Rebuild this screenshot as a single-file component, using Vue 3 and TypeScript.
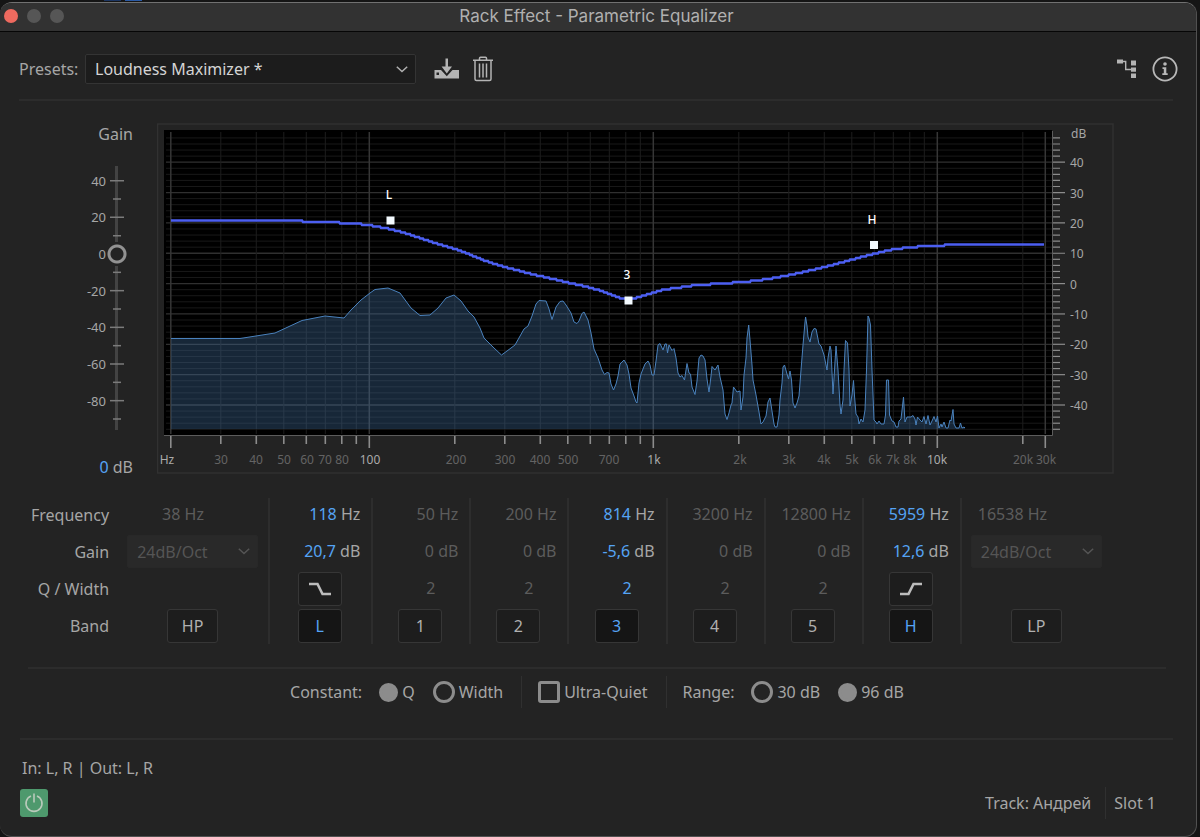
<script setup lang="ts">
import { ref } from 'vue'

type Point = [number, number]

interface Band {
  id: string
  freq: string
  gain: string
  q?: string
  shelf?: 'low' | 'high'
  on: boolean
}

const preset = ref('Loudness Maximizer *')
const masterGain = ref(0)
const constant = ref('q')
const ultraQuiet = ref(false)
const range = ref('96')

const bands = ref<Band[]>([
  { id: 'L', freq: '118', gain: '20,7', shelf: 'low', on: true },
  { id: '1', freq: '50', gain: '0', q: '2', on: false },
  { id: '2', freq: '200', gain: '0', q: '2', on: false },
  { id: '3', freq: '814', gain: '-5,6', q: '2', on: true },
  { id: '4', freq: '3200', gain: '0', q: '2', on: false },
  { id: '5', freq: '12800', gain: '0', q: '2', on: false },
  { id: 'H', freq: '5959', gain: '12,6', shelf: 'high', on: true },
])

/* Graph scales */
const freqX = (hz: number) => 369.3 + 284 * (Math.log10(hz) - 2)
const dbY = (db: number) => 283.6 - 3.035 * db

const freqs = [
  20, 30, 40, 50, 60, 70, 80, 90, 100, 200, 300, 400, 500, 600, 700, 800, 900,
  1000, 2000, 3000, 4000, 5000, 6000, 7000, 8000, 9000, 10000, 20000, 24000,
]
const majors = [20, 100, 1000, 10000, 24000]
const vLines = freqs.map((f) => ({ x: freqX(f), major: majors.includes(f) }))
const hLines = Array.from({ length: 49 }, (_, i) => 48 - i * 2).map((db) => ({
  db,
  y: dbY(db),
  major: db % 10 === 0,
}))
const dbLabels = hLines.filter((l) => l.major)

const freqLabels: { t: string; x: number; hi?: boolean }[] = [
  { t: 'Hz', x: 167, hi: true },
  { t: '30', x: 221 }, { t: '40', x: 256 }, { t: '50', x: 284 }, { t: '60', x: 307 },
  { t: '70', x: 325 }, { t: '80', x: 342 }, { t: '100', x: 370, hi: true },
  { t: '200', x: 456 }, { t: '300', x: 505 }, { t: '400', x: 540 }, { t: '500', x: 568 },
  { t: '700', x: 609 }, { t: '1k', x: 654, hi: true },
  { t: '2k', x: 740 }, { t: '3k', x: 789 }, { t: '4k', x: 824 }, { t: '5k', x: 852 },
  { t: '6k', x: 875 }, { t: '7k', x: 893 }, { t: '8k', x: 910 }, { t: '10k', x: 937, hi: true },
  { t: '20k', x: 1023 }, { t: '30k', x: 1046 },
]

/* Response curve, drawn in small level steps */
const curve: Point[] = [
  [171, 220.5], [302, 220.5], [304, 222], [338, 222], [340, 223.4], [355, 223.6], [368, 225],
  [378, 226.8], [390, 229], [405, 233], [420, 238], [438, 244], [455, 249], [470, 254.5],
  [483, 260], [503, 266.5], [520, 271], [540, 276], [570, 283], [585, 286.4], [600, 290.4], [610, 294],
  [620, 298], [628, 299.6], [636, 298], [650, 293.8], [663, 289.8], [680, 287.5], [695, 285.2],
  [715, 284], [737, 282.4], [753, 281], [768, 279], [790, 275], [812, 270], [834, 264.5],
  [856, 258.5], [874, 253.8], [890, 250], [904, 248], [919, 246.6], [947, 245.1], [1044, 245],
]
function levelAt(x: number): number {
  const i = Math.max(1, curve.findIndex((p) => p[0] >= x))
  const [x0, y0] = curve[i - 1]
  const [x1, y1] = curve[i]
  return y0 + ((y1 - y0) * (x - x0)) / (x1 - x0)
}
function steppedPath(): string {
  const snap = (v: number) => Math.round(v / 1.5) * 1.5
  let last = snap(levelAt(171))
  let d = `M171 ${last}`
  for (let x = 172; x <= 1044; x++) {
    const y = snap(levelAt(x))
    if (y !== last) {
      d += `H${x - 1}L${x} ${y}`
      last = y
    }
  }
  return d + 'H1044'
}
const curvePath = steppedPath()

const spectrum =
  '171,338.5 240,338.5 275,333 302,320.5 325,316 344,318 351,310 361,300 370,293 375,289.5 388,288 400,293 411,308 ' +
  '420,315.5 430,315 438,308 446,298 454,295 461,301 468,311 474,317 480,328 484,338 494,348 501.5,355 507,351 ' +
  '515,345 524,329 528,326 532,316 536,304 539,300.5 546,301 549,309 552,319.5 556,307 560,301.5 563,301 566,305 ' +
  '571,313 574,322 577,323.5 579,321 582,313.5 584,312 588,320 591,333 594,349 598,358 602,370 604.5,374.5 ' +
  '607,372.5 609,373 611,384 613.5,390 616,384 618,376 620,364 624,360 627,365 629,374 631,388 634,396 636,402 ' +
  '637,403 639,383 641,374 645,364 648,361 650,365 652,375 654,375 656,361 658,345 660,343.5 663,350 665,344 ' +
  '666.5,344 667.5,353 669,345 672,350.5 674,348.5 676,358 678,373 680,377 682,375.5 684.5,380 687,363.5 689,373 ' +
  '690.5,374 692,387 695,394.5 697,381 699,358 701,355 703,356 705,360 707,379 709,392 711,376 712,366.5 715,370 ' +
  '718,365 720,377 723,390 725,414 727,419.5 729,413 731,405 732,403 733.5,387 737,392 740,391 741,410 743,397 ' +
  '744,375 746,358 747,338 748.7,325 750,340 752,365 753,380 756,395 759,412 761,424 763,422 766,416 768,402 ' +
  '770,398 772,411 774,424 775,427 777,427 779,415 780,400 782,383 783,367 784.5,365 787,374 788.5,379 790,371 ' +
  '791.5,380 793,403 795,408 797,403 799,396 801,370 803,345 805,322 805.6,317 807,326 808,337 810,342 812,332 ' +
  '814,328.5 816,329 817,334 819,344 821,346 824,355 827,370 828,358 830,346 831,350 833,394 834,378 836,346 ' +
  '838,370 840,405 841,414 843,400 844,370 845.5,340.5 847.5,343 849,370 850,406 852,395 853.5,380.5 854.5,396 ' +
  '856,414 858,417 859,424 861,419 863,422 865,410 866.5,370 868,316 869,318 870.5,325 872,370 874,420 876,422 ' +
  '877,424 879,421 881,424 884,424 885.5,415 886.5,380 888.5,380 889.5,415 892,421 894,422 896,427 898,427 ' +
  '899,421 901,419 903.5,397 905,422 907,417 911,417 913,415.5 915,419 916,425 917.5,417 920,420 922,422 ' +
  '924,416.5 926,424 928,415.5 930,425 932,421 934,416.5 936,422 937.5,416 939,428 941,424 942,427 944,422 ' +
  '946,428 948,428 950,420 951,421 953,409.5 954,424 956,428 959,428 960.5,423 962,428 964,427 965,428'
const spectrumArea = `${spectrum} 965,429 171,429`

const handles = [
  { id: 'L', x: 390.5, y: 220.5, lx: 389, ly: 199 },
  { id: '3', x: 628.5, y: 300.5, lx: 627, ly: 279 },
  { id: 'H', x: 874, y: 245, lx: 872, ly: 224 },
]

/* Master gain scale, 48 dB at the top and -96 dB at the bottom */
const gainY = (db: number) => 12 + (48 - db) * (264 / 144)
const gainTicks = Array.from({ length: 14 }, (_, i) => 40 - i * 10)
  .filter((db) => db !== 0)
  .map((db) => ({ db, y: gainY(db), major: db % 20 === 0 }))
const gainLabels = [40, 20, 0, -20, -40, -60, -80]
</script>

<template>
  <div class="desktop">
    <div class="behind" aria-hidden="true"><i class="b1"></i><i class="b2"></i></div>
    <main class="window">
      <header class="titlebar">
        <div class="lights">
          <button type="button" class="light close" aria-label="Close"></button>
          <button type="button" class="light" aria-label="Minimize"></button>
          <button type="button" class="light" aria-label="Zoom"></button>
        </div>
        <h1>Rack Effect - Parametric Equalizer</h1>
      </header>

      <section class="presets">
        <label for="preset">Presets:</label>
        <div class="select preset">
          <select id="preset" v-model="preset">
            <option>Loudness Maximizer *</option>
          </select>
          <svg viewBox="0 0 12 7" width="12" height="7"><path d="M0.8 0.8L6 5.6L11.2 0.8" /></svg>
        </div>
        <button type="button" class="icon save" aria-label="Save preset">
          <svg viewBox="0 0 26 22" width="26" height="22">
            <path fill="#b4b4b4" fill-rule="evenodd" d="M0.500 12H7L12.800 18.300L18.500 12H25V20.500H0.500ZM2.500 14.500V17H5V14.500Z" />
            <path fill="#b4b4b4" d="M11.500 0.500H14V8.500H18L12.800 15.500L7.600 8.500H11.500Z" />
          </svg>
        </button>
        <button type="button" class="icon" aria-label="Delete preset">
          <svg viewBox="0 0 20 26" width="20" height="26" fill="none" stroke="#b4b4b4" stroke-width="1.500">
            <path d="M0 4.200H20M6.500 4V2.200Q6.500 1.200 7.500 1.200H12.500Q13.500 1.200 13.500 2.200V4M2 5V23Q2 24.500 3.500 24.500H16.500Q18 24.500 18 23V5" />
            <path d="M6.500 7.500V21.500M10 7.500V21.500M13.500 7.500V21.500" />
          </svg>
        </button>
        <span class="spacer"></span>
        <button type="button" class="icon routing" aria-label="Channel map">
          <svg viewBox="0 0 20 20" width="20" height="20">
            <path fill="#b4b4b4" d="M0 0.500H6V4.500H0ZM14 1.500H19V6.500H14ZM14 8.500H19V12.800H14ZM14 14.500H19V19H14Z" />
            <path fill="none" stroke="#b4b4b4" stroke-width="1.400" d="M6 2.500H8.700V10.500H14" />
          </svg>
        </button>
        <button type="button" class="icon info" aria-label="Effect information">
          <svg viewBox="0 0 26 26" width="26" height="26">
            <circle cx="13" cy="13" r="11.600" fill="none" stroke="#b8b8b8" stroke-width="1.800" />
            <circle cx="13" cy="8" r="1.800" fill="#b8b8b8" />
            <path fill="#b8b8b8" d="M10.500 11.300H14.300V17.200H15.700V18.900H10.300V17.200H11.800V13H10.500Z" />
          </svg>
        </button>
      </section>

      <section class="stage">
        <div class="gain">
          <label for="master">Gain</label>
          <div class="fader">
            <svg viewBox="0 0 57 288" width="57" height="288" aria-hidden="true">
              <path class="track" d="M32.500 12V276" />
              <path
                v-for="t in gainTicks"
                :key="t.db"
                class="tick"
                :d="t.major ? `M26 ${t.y}H40` : `M29 ${t.y}H37`"
              />
            </svg>
            <input id="master" v-model.number="masterGain" type="range" min="-96" max="48" />
            <svg class="over" viewBox="0 0 57 288" width="57" height="288" aria-hidden="true">
              <text v-for="db in gainLabels" :key="db" x="22" :y="gainY(db) + 5">{{ db }}</text>
            </svg>
          </div>
          <output for="master"><b>{{ masterGain }}</b> dB</output>
        </div>

        <svg class="graph" viewBox="157 123 957 351" role="img" aria-label="Frequency response">
          <rect x="157.500" y="124" width="955.500" height="349" fill="none" stroke="#313131" stroke-width="1.500" />
          <rect x="164" y="130" width="888" height="305" fill="#000" />
          <path v-for="l in hLines" :key="l.db" :class="l.major ? 'grid-hi' : 'grid'" :d="`M166 ${l.y}H1052`" />
          <path v-for="l in vLines" :key="l.x" :class="l.major ? 'vgrid-hi' : 'vgrid'" :d="`M${l.x} 132V434`" />
          <polygon :points="spectrumArea" fill="#406c9b" fill-opacity="0.36" />
          <polyline :points="spectrum" fill="none" stroke="#4a82bd" stroke-width="1" />
          <path :d="curvePath" fill="none" stroke="#4c5ff2" stroke-width="2.400" />

          <path class="axis" d="M164 435.500H1052.500V131" />
          <path v-for="l in vLines" :key="'t' + l.x" class="mark" :d="`M${l.x} 436V${l.major ? 448 : 444}`" />
          <path
            v-for="l in hLines"
            :key="'d' + l.db"
            class="mark thin"
            :d="`M1053 ${l.y}H${l.major ? 1065 : 1060}`"
          />
          <text v-for="l in freqLabels" :key="l.t" class="scale" :class="{ hi: l.hi }" :x="l.x" y="464">{{ l.t }}</text>
          <text class="db" x="1071" y="138">dB</text>
          <text v-for="l in dbLabels" :key="'l' + l.db" class="db" x="1070" :y="l.y + 5">{{ l.db }}</text>

          <g v-for="h in handles" :key="h.id">
            <rect :x="h.x - 4" :y="h.y - 4" width="8" height="8" fill="#f4fbff" />
            <text class="node" :x="h.lx" :y="h.ly">{{ h.id }}</text>
          </g>
        </svg>
      </section>

      <section class="bands">
        <div class="col names">
          <span>Frequency</span><span>Gain</span><span>Q / Width</span><span>Band</span>
        </div>
        <div class="col hp">
          <span class="value off">38 Hz</span>
          <div class="cell">
            <div class="select slope">
              <select disabled aria-label="High pass slope"><option>24dB/Oct</option></select>
              <svg viewBox="0 0 12 7" width="12" height="7"><path d="M0.8 0.8L6 5.6L11.2 0.8" /></svg>
            </div>
          </div>
          <span class="cell"></span>
          <div class="cell"><button type="button" class="key wide">HP</button></div>
        </div>
        <div v-for="b in bands" :key="b.id" class="col band">
          <span class="value" :class="{ off: !b.on }"><b>{{ b.freq }}</b> Hz</span>
          <span class="value" :class="{ off: !b.on }"><b>{{ b.gain }}</b> dB</span>
          <div v-if="b.shelf" class="cell">
            <button type="button" class="key" :aria-label="b.shelf + ' shelf slope'">
              <svg viewBox="0 0 22 14" width="22" height="14">
                <path v-if="b.shelf === 'low'" d="M0 2H8.500L13.500 12H22" />
                <path v-else d="M0 12H8.500L13.500 2H22" />
              </svg>
            </button>
          </div>
          <span v-else class="value q" :class="{ off: !b.on }"><b>{{ b.q }}</b></span>
          <div class="cell">
            <button type="button" class="key" :class="{ on: b.on }" :aria-pressed="b.on" @click="b.on = !b.on">
              {{ b.id }}
            </button>
          </div>
        </div>
        <div class="col lp">
          <span class="value off">16538 Hz</span>
          <div class="cell">
            <div class="select slope">
              <select disabled aria-label="Low pass slope"><option>24dB/Oct</option></select>
              <svg viewBox="0 0 12 7" width="12" height="7"><path d="M0.8 0.8L6 5.6L11.2 0.8" /></svg>
            </div>
          </div>
          <span class="cell"></span>
          <div class="cell"><button type="button" class="key wide">LP</button></div>
        </div>
      </section>

      <section class="options">
        <div class="group" role="radiogroup" aria-label="Constant">
          <span class="lead">Constant:</span>
          <label><input v-model="constant" type="radio" name="constant" value="q" />Q</label>
          <label><input v-model="constant" type="radio" name="constant" value="w" />Width</label>
        </div>
        <div class="group">
          <label><input v-model="ultraQuiet" type="checkbox" />Ultra-Quiet</label>
        </div>
        <div class="group" role="radiogroup" aria-label="Range">
          <span class="lead">Range:</span>
          <label><input v-model="range" type="radio" name="range" value="30" />30 dB</label>
          <label><input v-model="range" type="radio" name="range" value="96" />96 dB</label>
        </div>
      </section>

      <footer class="status">
        <p>In: L, R | Out: L, R</p>
        <div class="bottom">
          <button type="button" class="power" aria-label="Power">
            <svg viewBox="0 0 20 20" width="20" height="20" fill="none" stroke="#b9cabb" stroke-width="1.600">
              <path d="M7 3A8 8 0 1 0 13 3M10 0.500V9.500" />
            </svg>
          </button>
          <span class="track-name">Track: Андрей</span>
          <span class="slot">Slot 1</span>
        </div>
      </footer>
    </main>
  </div>
</template>

<style>
body {
  background: #151515;
}
</style>

<style scoped>
* {
  box-sizing: border-box;
}
.desktop {
  display: flex;
  flex-direction: column;
  min-height: 100vh;
  padding-right: 3px;
  background: #151515;
  color: #a6a6a6;
  font: 16px/20px 'Noto Sans', 'Open Sans', sans-serif;
}
.behind {
  display: flex;
  gap: 4px;
  height: 1px;
  margin-bottom: 1px;
  padding-left: 104px;
}
.behind i {
  width: 17px;
}
.b1 {
  background: #1c3663;
}
.b2 {
  background: #2a5aa5;
}
.window {
  display: flex;
  flex: 1;
  flex-direction: column;
  overflow: hidden;
  border: solid #515151;
  border-width: 1px 1px 1px 0;
  border-top-color: #717171;
  border-radius: 12px;
  background: #232323;
}
button {
  padding: 0;
  border: 0;
  background: none;
  color: inherit;
  font: inherit;
}
.titlebar {
  display: grid;
  align-items: center;
  height: 29px;
  padding-bottom: 2px;
  border-bottom: 1px solid #060606;
  background: #323232;
}
.lights,
h1 {
  grid-area: 1 / 1;
}
.lights {
  display: flex;
  gap: 9px;
  padding-left: 4px;
}
.light {
  width: 14px;
  height: 14px;
  border-radius: 50%;
  background: #565656;
}
.light.close {
  background: #ee6a5f;
}
h1 {
  margin: 0;
  padding-right: 3px;
  color: #b0b0b0;
  font: 400 17px/20px Inter, Roboto, sans-serif;
  text-align: center;
}
.presets {
  display: flex;
  align-items: center;
  margin: 0 23px 0 19px;
  padding: 22px 0 15px;
  border-bottom: 2px solid #2c2c2c;
}
.presets label {
  width: 66px;
}
.select {
  position: relative;
  display: flex;
  align-items: center;
}
.select select {
  width: 100%;
  height: 30px;
  padding: 0 32px 0 9px;
  appearance: none;
  border: 1px solid #343434;
  border-radius: 2px;
  background: #1c1c1c;
  color: #d4d4d4;
  font: inherit;
  opacity: 1;
}
.select svg {
  position: absolute;
  right: 8px;
  fill: none;
  stroke: #b0b0b0;
  stroke-width: 1.5;
  pointer-events: none;
}
.preset {
  width: 331px;
}
.icon {
  display: flex;
}
.save {
  margin: 0 13px 0 18px;
}
.spacer {
  flex: 1;
}
.routing {
  margin-right: 15px;
}
.info {
  margin-right: -5px;
}
.stage {
  display: flex;
  align-items: flex-start;
  padding: 22px 82px 0 0;
}
.gain {
  display: flex;
  flex: none;
  flex-direction: column;
  align-items: flex-end;
  width: 157px;
  padding-right: 24px;
}
.fader {
  display: grid;
  width: 57px;
  margin: 9px -8px 14px 0;
}
.fader > * {
  grid-area: 1 / 1;
}
.track {
  stroke: #434343;
  stroke-width: 3;
}
.tick {
  stroke: #7b7b7b;
  stroke-width: 1.5;
}
.over {
  z-index: 1;
  pointer-events: none;
}
.over text {
  fill: #a6a6a6;
  font-size: 13px;
  text-anchor: end;
}
.fader input {
  width: 24px;
  height: 288px;
  margin: 0 0 0 21px;
  appearance: none;
  background: none;
  writing-mode: vertical-lr;
  direction: rtl;
}
.fader input::-webkit-slider-thumb {
  width: 24px;
  height: 24px;
  appearance: none;
  background: radial-gradient(circle at center, #232323 6px, #929292 7px, #929292 9px, #232323 10px, #232323 12px, transparent 12px);
}
.gain label,
output {
  line-height: 22px;
}
b {
  color: #55a3f4;
  font-weight: 400;
}
.graph {
  display: block;
  flex: 1;
  min-width: 0;
}
.grid {
  stroke: #191919;
}
.grid-hi {
  stroke: #303030;
  stroke-width: 1.3;
}
.vgrid {
  stroke: #1d1d1d;
}
.vgrid-hi {
  stroke: #363636;
  stroke-width: 1.5;
}
.axis {
  fill: none;
  stroke: #5c5c5c;
}
.mark {
  stroke: #8c8c8c;
  stroke-width: 1.6;
}
.mark.thin {
  stroke-width: 1.2;
}
.scale,
.db,
.node {
  font-size: 12px;
}
.scale {
  fill: #636363;
  text-anchor: middle;
}
.scale.hi {
  fill: #aaa;
}
.db {
  fill: #a6a6a6;
}
.node {
  fill: #fff;
  font-weight: 500;
  text-anchor: middle;
}
.bands {
  display: grid;
  grid-template-columns: 109fr 159fr 103fr repeat(6, 98fr) 236fr;
  margin-top: 20px;
}
.col {
  display: flex;
  flex-direction: column;
  height: 146px;
}
.col > * {
  flex: none;
  height: 37px;
  line-height: 32px;
}
.band,
.lp {
  border-left: 2px solid #2d2d2d;
}
.cell {
  display: flex;
  align-items: center;
  justify-content: center;
  padding-bottom: 4px;
}
.band .cell {
  padding-right: 2px;
}
.names {
  align-items: flex-end;
}
.names > * {
  line-height: 34px;
}
.hp {
  padding: 0 10px 0 18px;
}
.lp {
  width: 151px;
  padding: 0 9px;
}
.hp .value,
.lp .value {
  text-align: left;
}
.hp .value {
  padding-left: 35px;
}
.lp .value {
  padding-left: 7px;
}
.slope {
  width: 131px;
}
.slope select {
  height: 33px;
  border-color: #282828;
  background: #292929;
  color: #555;
}
.slope svg {
  stroke: #555;
}
.value {
  padding-right: 11px;
  text-align: right;
}
.value.q {
  padding-right: 34px;
}
.off,
.off b {
  color: #5c5c5c;
}
.key {
  display: flex;
  align-items: center;
  justify-content: center;
  width: 44px;
  height: 34px;
  border: 1px solid #363636;
  border-radius: 3px;
  background: #1d1d1d;
  color: #b0b0b0;
}
.key.wide {
  width: 51px;
}
.key.on {
  background: #151515;
  color: #55a3f4;
}
.key svg {
  fill: none;
  stroke: #bcbcbc;
  stroke-width: 2.6;
}
.options {
  display: flex;
  align-items: center;
  justify-content: center;
  margin: 23px 30px 0 28px;
  padding: 7px 0 30px;
  border-top: 2px solid #2c2c2c;
}
.group {
  display: flex;
  align-items: center;
  height: 32px;
}
.group + .group {
  margin-left: 18px;
  padding-left: 16px;
  border-left: 1px solid #303030;
}
.lead {
  margin-right: 17px;
}
.group label {
  display: flex;
  align-items: center;
  gap: 4px;
}
.group label + label {
  margin-left: 18px;
}
.group input {
  width: 22px;
  height: 22px;
  margin: 0;
  appearance: none;
  border: 3px solid #8c8c8c;
  border-radius: 50%;
}
.group input[type='checkbox'] {
  border-radius: 3px;
}
.group input[type='radio']:checked {
  width: 19px;
  height: 19px;
  background: #8c8c8c;
}
.status {
  margin: 0 23px 0 20px;
  padding-top: 18px;
  border-top: 2px solid #2c2c2c;
}
.status p {
  margin: 0 0 9px 2px;
}
.bottom {
  display: flex;
  align-items: center;
  padding-right: 17px;
}
.power {
  display: flex;
  align-items: center;
  justify-content: center;
  width: 28px;
  height: 28px;
  margin-right: auto;
  border-radius: 3px;
  background: #4e996d;
}
.track-name {
  padding-right: 14px;
}
.slot {
  padding: 6px 0 6px 8px;
  border-left: 1px solid #303030;
}
</style>
